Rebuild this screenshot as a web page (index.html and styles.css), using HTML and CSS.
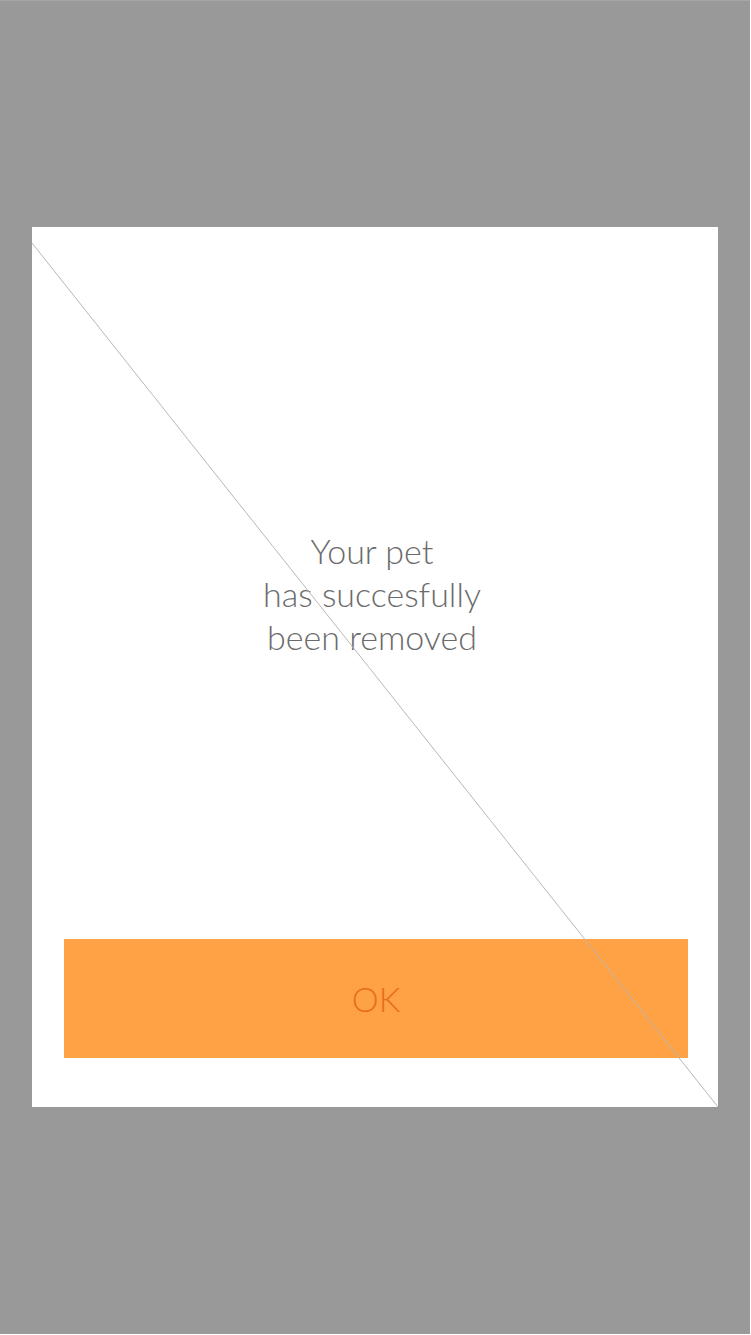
FILE: index.html
```html
<!DOCTYPE html>
<html>
<head>
<meta charset="utf-8">
<link rel="stylesheet" href="styles.css">
</head>
<body>
<div class="screen">
  <div class="card">
    <svg class="diag" width="686" height="880" viewBox="0 0 686 880" preserveAspectRatio="none">
      <line x1="0" y1="16" x2="686" y2="880" stroke="#b8b8b8" stroke-width="1"/>
    </svg>
    <div class="message">
      <p>Your pet<br>has succesfully<br>been removed</p>
    </div>
    <button class="ok">OK</button>
  </div>
</div>
</body>
</html>
```
FILE: styles.css
```css
html, body {
  margin: 0;
  padding: 0;
  background: #ffffff;
}
.screen {
  width: 750px;
  height: 1334px;
  background: #999999;
  border-top: 1px solid #a6a6a6;
  box-sizing: border-box;
  padding-top: 226px;
  padding-left: 32px;
}
.card {
  position: relative;
  width: 686px;
  height: 880px;
  background: #ffffff;
  display: flex;
  flex-direction: column;
  box-sizing: border-box;
  padding: 0 30px 49px 32px;
}
.diag {
  position: absolute;
  left: 0;
  top: 0;
  pointer-events: none;
  z-index: 2;
}
.message {
  flex: 1;
  display: flex;
  align-items: center;
  justify-content: center;
  padding-top: 20px;
}
.message p {
  margin: 0;
  font-family: Lato, "Open Sans", sans-serif;
  font-weight: 300;
  font-size: 34px;
  line-height: 43px;
  color: #6b6b6b;
  text-align: center;
  margin-right: 8px;
}
.ok {
  height: 119px;
  width: 624px;
  border: none;
  background: #ffa246;
  color: #e86d1f;
  font-family: Lato, "Open Sans", sans-serif;
  font-weight: 300;
  font-size: 34px;
  padding: 0;
  margin: 0;
}
```
